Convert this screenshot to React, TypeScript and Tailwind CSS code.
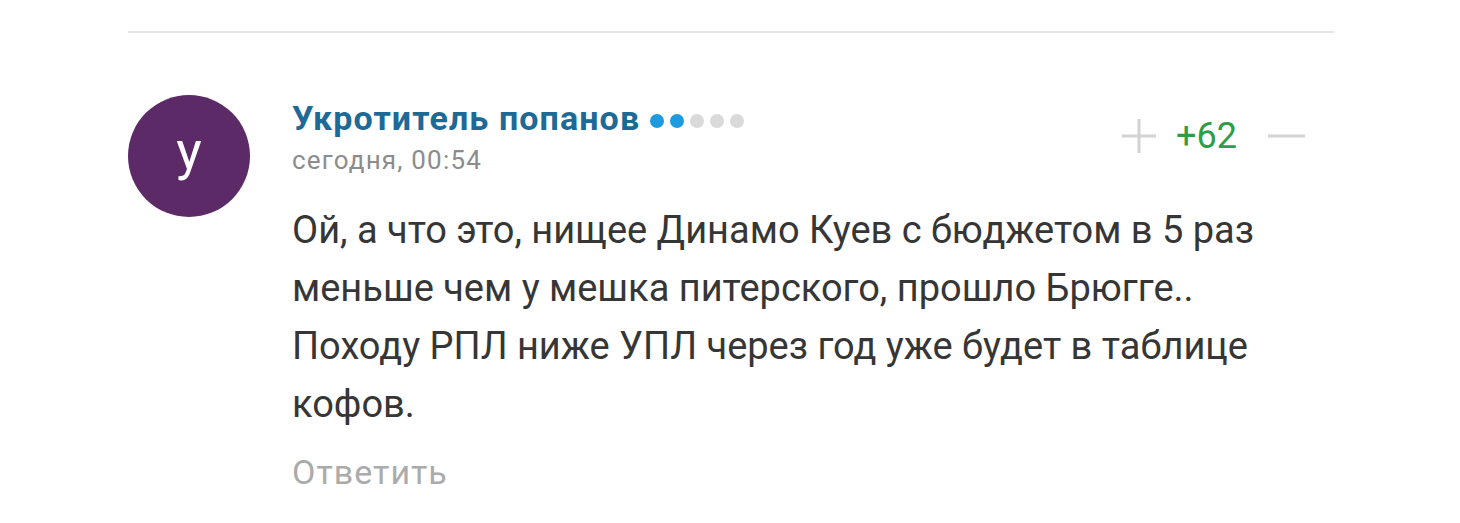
import React from "react";

const dots = ["#1e9be0", "#1e9be0", "#dadada", "#dadada", "#dadada"];

const lines = [
  "Ой, а что это, нищее Динамо Куев с бюджетом в 5 раз",
  "меньше чем у мешка питерского, прошло Брюгге..",
  "Походу РПЛ ниже УПЛ через год уже будет в таблице",
  "кофов.",
];

export default function App() {
  return (
    <div className="w-[1460px] h-[523px] bg-white" style={{ fontFamily: "Roboto, 'Noto Sans', sans-serif" }}>
      <div className="ml-[128px] w-[1206px] pt-[31px]">
        <div className="h-[2px] bg-[#e4e4e4]" />
        <div className="flex mt-[62px]">
          <div className="w-[122px] h-[122px] rounded-full bg-[#5d2a68] flex items-center justify-center text-white text-[54px] leading-none pb-[10px] shrink-0">
            у
          </div>
          <div className="ml-[42px] flex-1 min-w-0">
            <div className="flex items-start justify-between">
              <div className="mt-[3px]">
                <div className="flex items-center">
                  <span className="text-[#1d6a97] font-bold text-[34px] leading-[40px] tracking-[1.1px]">Укротитель попанов</span>
                  <span className="flex ml-[10px] gap-[6px] mt-[5px]">
                    {dots.map((c, i) => (
                      <span key={i} className="w-[14px] h-[14px] rounded-full" style={{ background: c }} />
                    ))}
                  </span>
                </div>
                <div className="text-[#8c8c8c] text-[26px] leading-[34px] tracking-[1.2px] mt-[5px]">сегодня, 00:54</div>
              </div>
              <div className="flex items-center mt-[21px] mr-[29px]">
                <svg width="36" height="40" viewBox="0 0 36 40" className="text-[#d2d2d2]">
                  <path d="M18 3v34M1 20h34" stroke="currentColor" strokeWidth="3" />
                </svg>
                <span className="text-[#2e9e46] text-[36px] leading-[40px] ml-[19px] mr-[31px]">+62</span>
                <svg width="37" height="40" viewBox="0 0 37 40" className="text-[#d2d2d2]">
                  <path d="M0 20h37" stroke="currentColor" strokeWidth="3" />
                </svg>
              </div>
            </div>
            <div className="text-[#363636] text-[38px] leading-[58px] mt-[24px]">
              {lines.map((l, i) => (
                <div key={i} className="whitespace-nowrap">{l}</div>
              ))}
            </div>
            <div className="text-[#ababab] text-[34px] leading-[40px] tracking-[1px] mt-[19px]">Ответить</div>
          </div>
        </div>
      </div>
    </div>
  );
}
